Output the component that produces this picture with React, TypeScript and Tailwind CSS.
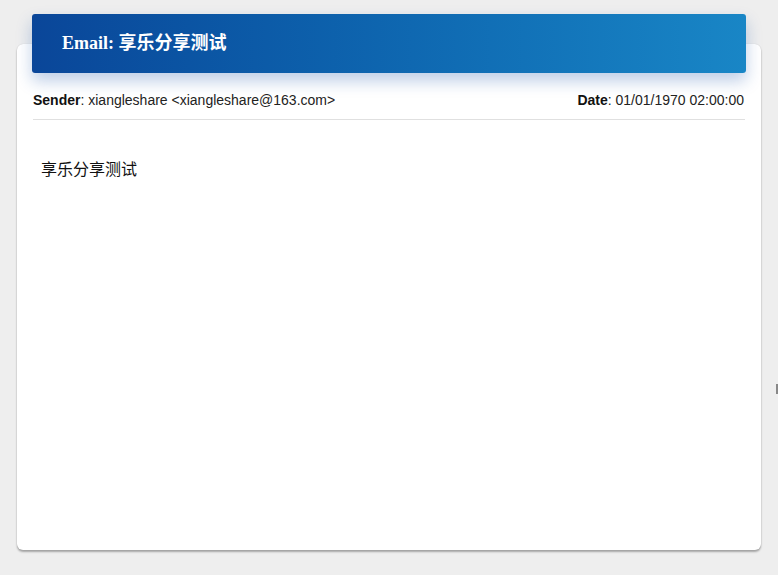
import React from 'react';

export default function App() {
  return (
    <div className="relative min-h-[575px] w-full bg-[#eeeeee] pt-[44px] pl-[17px]" style={{ fontFamily: '"Liberation Sans", Arial, "Noto Sans CJK SC", sans-serif' }}>
      <div className="flex h-[506px] w-[744px] flex-col rounded-[6px] bg-white px-[16px] shadow-[0_2px_2px_rgba(0,0,0,0.3),0_0_1px_rgba(0,0,0,0.2)]">
        <div className="-mx-px mt-[-30px] flex h-[59px] items-center rounded-[3px] bg-gradient-to-r from-[#0a4699] to-[#1986c6] pl-[30px] shadow-[0_8px_16px_rgba(20,80,170,0.28)]">
          <h1 className="text-[18px] font-bold text-white" style={{ fontFamily: '"Liberation Serif", "Times New Roman", "Noto Sans CJK SC", serif' }}>
            Email: 享乐分享测试
          </h1>
        </div>

        <div className="flex items-center justify-between border-b border-[#e0e0e0] pt-[19px] pb-[11px] text-[14px] leading-[16px] text-[#222]">
          <span>
            <b className="text-[#111]">Sender</b>: xiangleshare &lt;xiangleshare@163.com&gt;
          </span>
          <span className="pr-px">
            <b className="text-[#111]">Date</b>: 01/01/1970 02:00:00
          </span>
        </div>

        <div className="px-[8px] pt-[40px] text-[16px] leading-[20px] text-[#111]">享乐分享测试</div>
      </div>

      <div className="absolute right-0 top-[384px] h-[10px] w-[2px] bg-[#888]" />
    </div>
  );
}
